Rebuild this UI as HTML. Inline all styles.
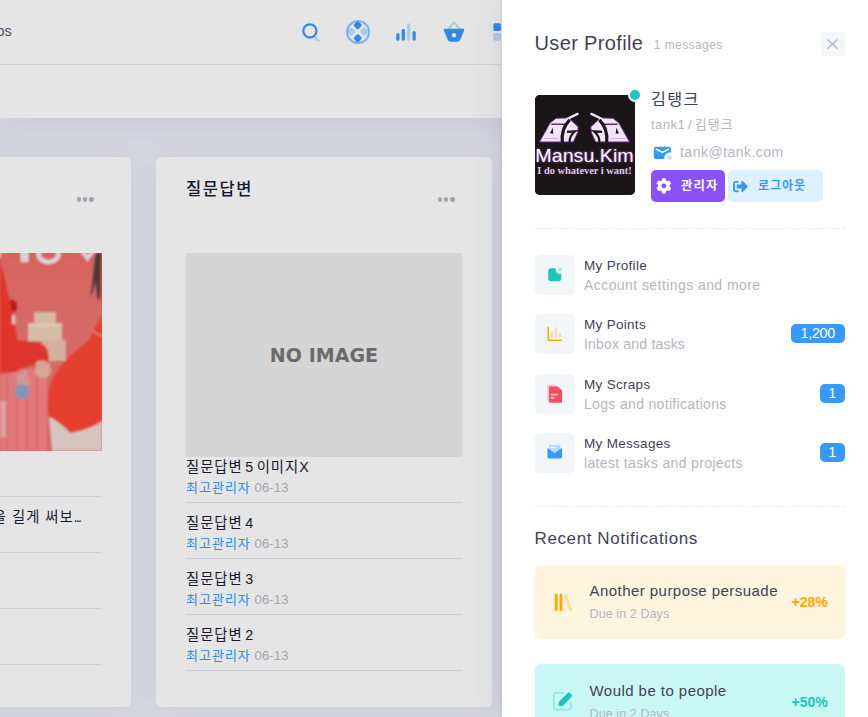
<!DOCTYPE html>
<html lang="ko">
<head>
<meta charset="utf-8">
<title>User Profile</title>
<style>
*{box-sizing:border-box;margin:0;padding:0}
html,body{width:868px;height:717px;overflow:hidden}
body{position:relative;background:#EEF0F8;font-family:"Liberation Sans","Noto Sans CJK KR",sans-serif;font-size:13px;color:#3F4254}
.abs{position:absolute}
#header{position:absolute;z-index:2;left:0;top:0;width:868px;height:65px;background:#fff;border-bottom:1px solid #E8EEF1}
#subheader{position:absolute;left:0;top:65px;width:868px;height:53px;background:#fff;box-shadow:0 10px 30px 0 rgba(82,63,105,.08)}
.menu-os{position:absolute;right:856.4px;top:21.8px;font-size:14.3px;line-height:18px;color:#50567A;white-space:nowrap}
.card{position:absolute;top:157px;height:550px;background:#fff;border-radius:5.5px;box-shadow:0 0 30px 0 rgba(82,63,105,.05)}
#card1{left:-205px;width:336px}
#card2{left:156px;width:336px}
.card h3{position:absolute;left:30px;top:19.2px;font-size:16.5px;font-weight:500;color:#181C32;white-space:nowrap;letter-spacing:1.6px}
.dots{position:absolute;top:40.2px;right:36.5px;width:18px;height:5px}
.dots i{position:absolute;top:0;width:4.6px;height:4.6px;border-radius:50%;background:#B5B5C3}
.noimg{position:absolute;left:30px;top:96px;width:276px;height:204px;background:#EEEEEE;text-align:center;line-height:204px;font-family:"DejaVu Sans","Liberation Sans",sans-serif;font-weight:bold;font-size:19px;color:#777;letter-spacing:.05px}
.row{position:absolute;left:30px;width:276px;height:56px;border-bottom:1px solid #E0E7EC}
.row .t{position:absolute;left:0;top:10px;font-size:14.3px;color:#181C32;white-space:nowrap;line-height:20px;letter-spacing:1px;word-spacing:-2.4px}
.row .m{position:absolute;left:0;top:31px;font-size:13px;color:#B5B5C3;white-space:nowrap;line-height:20px;letter-spacing:.15px}
.row .m b{font-weight:400;color:#3699FF;letter-spacing:1px}
#overlay{position:absolute;z-index:5;left:0;top:0;width:868px;height:717px;background:rgba(0,0,0,.1)}
#panel{position:absolute;z-index:6;left:502px;top:0;width:375px;height:717px;background:#fff;box-shadow:0 0 28px 0 rgba(82,63,105,.13),-1px 0 3px 0 rgba(0,0,0,.06)}

#panel .ttl{position:absolute;left:32.5px;top:29.8px;font-size:20px;line-height:26px;color:#3F4254;white-space:nowrap;letter-spacing:.36px}
#panel .ttl small{font-size:12px;color:#B5B5C3;margin-left:10.5px;letter-spacing:.42px;position:relative;top:-.6px}
.close{position:absolute;left:319px;top:32px;width:24px;height:24px;border-radius:4px;background:#F3F6F9}
.close svg{position:absolute;left:0;top:0}
.avatar{position:absolute;left:33px;top:95px;width:100px;height:100px;border-radius:5px;overflow:hidden;background:#1a1517}
.online{position:absolute;left:126px;top:88px;width:14px;height:14px;border-radius:50%;background:#1BC5BD;border:2px solid #fff}
.uname{position:absolute;left:149px;top:86px;font-size:16.25px;line-height:26px;color:#3F4254;white-space:nowrap;letter-spacing:1.3px}
.uid{position:absolute;left:149px;top:114px;font-size:13.2px;line-height:22px;color:#B5B5C3;white-space:nowrap;letter-spacing:.38px;word-spacing:-1.3px}
.uid span{font-size:13px;letter-spacing:1.04px}
.mail{position:absolute;left:148.8px;top:140.7px}
.email{position:absolute;left:178px;top:141px;font-size:14px;line-height:22px;color:#B5B5C3;white-space:nowrap;letter-spacing:.48px}
.btn{position:absolute;top:170px;height:32px;border-radius:5px;font-size:12px;font-weight:700;line-height:32px;white-space:nowrap;letter-spacing:.96px}
.btn svg{position:absolute}
.btn-admin{left:149px;width:74px;background:#8950FC;color:#fff;font-size:12.3px;letter-spacing:1.2px}
.btn-logout{left:226px;width:95px;background:#E1F0FF;color:#3699FF}
.sep{position:absolute;left:32.5px;width:310px;height:0;border-top:1px dashed #EBEDF3}
.nav{position:absolute;left:32.5px;width:310px;height:40px}
.nav .sym{position:absolute;left:0;top:0;width:40px;height:40px;border-radius:5.5px;background:#F3F6F9}
.nav .sym svg{position:absolute;left:10.25px;top:10.25px;width:19.5px;height:19.5px}
.nav .a{position:absolute;left:49.5px;top:1px;font-size:13.5px;line-height:20px;color:#3F4254;white-space:nowrap;letter-spacing:.3px}
.nav .b{position:absolute;left:49.5px;top:20px;font-size:14px;line-height:20px;color:#B5B5C3;white-space:nowrap;letter-spacing:.43px}
.badge{position:absolute;right:0;top:9.75px;height:19.5px;border-radius:5px;background:#3699FF;color:#fff;font-size:14.3px;line-height:19.5px;text-align:center;letter-spacing:-.25px}
.h5{position:absolute;left:32.5px;top:527.2px;font-size:17px;line-height:24px;color:#3F4254;white-space:nowrap;letter-spacing:.61px}
.note{position:absolute;left:32.5px;width:310px;height:74px;border-radius:6px}
.note svg{position:absolute;left:16.25px;top:25.6px;width:22.75px;height:22.75px}
.note .a{position:absolute;left:55px;top:16px;font-size:15px;line-height:20px;color:#3F4254;white-space:nowrap;letter-spacing:.45px}
.note .b{position:absolute;left:55px;top:40px;font-size:12.5px;line-height:18px;color:#B5B5C3;white-space:nowrap;letter-spacing:.1px}
.note .pct{position:absolute;right:16.8px;top:27.2px;font-size:14px;font-weight:700;line-height:20px;white-space:nowrap;letter-spacing:0}
.hi{position:absolute}
.ring{position:absolute;left:346px;top:20px;width:24px;height:24px;border-radius:50%;border:2px solid rgba(54,153,255,.55)}
.photo{position:absolute;left:204.5px;top:96px}
</style>
</head>
<body>
<div id="header">
  <div class="menu-os">Apps</div>
  <svg class="hi" style="left:297.5px;top:19px" width="26" height="26" viewBox="0 0 24 24" fill="#3699FF"><path d="M14.2928932,16.7071068 C13.9023689,16.3165825 13.9023689,15.6834175 14.2928932,15.2928932 C14.6834175,14.9023689 15.3165825,14.9023689 15.7071068,15.2928932 L19.7071068,19.2928932 C20.0976311,19.6834175 20.0976311,20.3165825 19.7071068,20.7071068 C19.3165825,21.0976311 18.6834175,21.0976311 18.2928932,20.7071068 L14.2928932,16.7071068 Z" opacity="0.3"/><path d="M11,16 C13.7614237,16 16,13.7614237 16,11 C16,8.23857625 13.7614237,6 11,6 C8.23857625,6 6,8.23857625 6,11 C6,13.7614237 8.23857625,16 11,16 Z M11,18 C7.13400675,18 4,14.8659932 4,11 C4,7.13400675 7.13400675,4 11,4 C14.8659932,4 18,7.13400675 18,11 C18,14.8659932 14.8659932,18 11,18 Z"/></svg>
  <div class="ring"></div>
  <svg class="hi" style="left:345px;top:18.8px" width="26" height="26" viewBox="0 0 24 24" fill="#3699FF"><path d="M2.56,10.68 L4.68,8.56 C5.27,7.97 6.22,7.97 6.8,8.56 L8.92,10.68 C9.51,11.27 9.51,12.22 8.92,12.8 L6.8,14.92 C6.22,15.51 5.27,15.51 4.68,14.92 L2.56,12.8 C1.97,12.22 1.97,11.27 2.56,10.68 Z M14.56,10.68 L16.68,8.56 C17.27,7.97 18.22,7.97 18.8,8.56 L20.92,10.68 C21.51,11.27 21.51,12.22 20.92,12.8 L18.8,14.92 C18.22,15.51 17.27,15.51 16.68,14.92 L14.56,12.8 C13.97,12.22 13.97,11.27 14.56,10.68 Z" opacity="0.3"/><path d="M8.56,16.68 L10.68,14.56 C11.27,13.97 12.22,13.97 12.8,14.56 L14.92,16.68 C15.51,17.27 15.51,18.22 14.92,18.8 L12.8,20.92 C12.22,21.51 11.27,21.51 10.68,20.92 L8.56,18.8 C7.97,18.22 7.97,17.27 8.56,16.68 Z M8.56,4.68 L10.68,2.56 C11.27,1.97 12.22,1.97 12.8,2.56 L14.92,4.68 C15.51,5.27 15.51,6.22 14.92,6.8 L12.8,8.92 C12.22,9.51 11.27,9.51 10.68,8.92 L8.56,6.8 C7.97,6.22 7.97,5.27 8.56,4.68 Z"/></svg>
  <svg class="hi" style="left:393px;top:19px" width="26" height="26" viewBox="0 0 24 24" fill="#3699FF"><rect opacity="0.3" x="13" y="4" width="3" height="16" rx="1.5"/><rect x="8" y="9" width="3" height="11" rx="1.5"/><rect x="18" y="11" width="3" height="9" rx="1.5"/><rect x="3" y="13" width="3" height="7" rx="1.5"/></svg>
  <svg class="hi" style="left:441px;top:19px" width="26" height="26" viewBox="0 0 24 24" fill="#3699FF"><path d="M12,4.56204994 L7.76822128,9.6401844 C7.4146572,10.0644613 6.7840925,10.1217854 6.3598156,9.76822128 C5.9355387,9.4146572 5.87821464,8.7840925 6.23177872,8.3598156 L11.2317787,2.3598156 C11.6315738,1.88006147 12.3684262,1.88006147 12.7682213,2.3598156 L17.7682213,8.3598156 C18.1217854,8.7840925 18.0644613,9.4146572 17.6401844,9.76822128 C17.2159075,10.1217854 16.5853428,10.0644613 16.2317787,9.6401844 L12,4.56204994 Z" opacity="0.3"/><path d="M3.5,9 L20.5,9 C21.0522847,9 21.5,9.44771525 21.5,10 C21.5,10.132026 21.4738562,10.2627452 21.4230769,10.3846154 L17.7692308,19.1538462 C17.3034221,20.271787 16.2111026,21 15,21 L9,21 C7.78889745,21 6.6965779,20.271787 6.23076923,19.1538462 L2.57692308,10.3846154 C2.36450587,9.87481408 2.60558331,9.28934029 3.11538462,9.07692308 C3.23725479,9.02614384 3.36797398,9 3.5,9 Z M12,17 C13.1045695,17 14,16.1045695 14,15 C14,13.8954305 13.1045695,13 12,13 C10.8954305,13 10,13.8954305 10,15 C10,16.1045695 10.8954305,17 12,17 Z"/></svg>
  <svg class="hi" style="left:488.9px;top:18.8px" width="26" height="26" viewBox="0 0 24 24" fill="#3699FF"><rect x="4" y="4" width="7" height="7" rx="1.5"/><path d="M5.5,13 L9.5,13 C10.33,13 11,13.67 11,14.5 L11,18.5 C11,19.33 10.33,20 9.5,20 L5.5,20 C4.67,20 4,19.33 4,18.5 L4,14.5 C4,13.67 4.67,13 5.5,13 Z M14.5,4 L18.5,4 C19.33,4 20,4.67 20,5.5 L20,9.5 C20,10.33 19.33,11 18.5,11 L14.5,11 C13.67,11 13,10.33 13,9.5 L13,5.5 C13,4.67 13.67,4 14.5,4 Z M14.5,13 L18.5,13 C19.33,13 20,13.67 20,14.5 L20,18.5 C20,19.33 19.33,20 18.5,20 L14.5,20 C13.67,20 13,19.33 13,18.5 L13,14.5 C13,13.67 13.67,13 14.5,13 Z" opacity="0.3"/></svg>

</div>
<div id="subheader"></div>

<div class="card" id="card1">
  <div class="dots"><i style="left:0"></i><i style="left:6.3px"></i><i style="left:12.6px"></i></div>
  <svg class="photo" width="102" height="198" viewBox="0 0 102 198">
<defs><filter id="pb" x="-5%" y="-5%" width="110%" height="110%"><feGaussianBlur stdDeviation="0.8"/></filter>
<linearGradient id="bgp" x1="0" y1="0" x2="0" y2="1"><stop offset="0" stop-color="#F06E66"/><stop offset=".35" stop-color="#EE7772"/><stop offset="1" stop-color="#F07470"/></linearGradient></defs>
<rect width="102" height="198" fill="url(#bgp)"/>
<g filter="url(#pb)">
<!-- banner letters -->
<path d="M-2,-2 L-2,4" stroke="#F3E9F6" stroke-width="6" fill="none"/>
<path d="M24.5,-4 L24.5,9.3" stroke="#F3E9F6" stroke-width="8.5" fill="none"/>
<path d="M38.5,-6 L38.5,0 C38.5,12 58.5,12 58.5,0 L58.5,-6" stroke="#F3E9F6" stroke-width="5.2" fill="none"/>
<path d="M80,-5 L87.5,5.5 L95,-5" stroke="#F3E9F6" stroke-width="4.2" fill="none"/>
<!-- stripes bottom left -->
<rect x="0" y="116" width="47" height="82" fill="#FB878B"/>
<path d="M7,116 V198 M17,116 V198 M27,116 V198 M37,116 V198" stroke="#F57A7E" stroke-width="2.5"/>
<rect x="0" y="148" width="6" height="36" fill="#FAB4B4"/>
<!-- cake tower -->
<rect x="34" y="59" width="22" height="14" fill="#EFCFB4"/>
<rect x="28" y="73" width="34" height="15" fill="#F0D2BC"/>
<rect x="42" y="87" width="24" height="21" fill="#EFC4B2"/>
<rect x="28" y="70" width="34" height="4" fill="#F6DCCB"/>
<!-- left figure -->
<path d="M0,8 C4,20 6,34 9,46 C13,56 15,72 17,87 C26,88 36,89 44,92 C50,97 50,108 46,115 L30,112 L15,119 L0,121 Z" fill="#F93A32"/>
<path d="M10,47 C17,45 19,55 15,59 C12,60 10,54 10,47 Z" fill="#D41E1A"/>
<rect x="12" y="62" width="3.4" height="9" fill="#F7D8D0"/>
<path d="M36,109 C44,105 53,110 51,120 C48,127 40,126 35,121 Z" fill="#EBB9AA"/>
<!-- mic -->
<path d="M16,120 L27,117 L30,132 L17,135 Z" fill="#E9A9A4"/><ellipse cx="22" cy="138.5" rx="7.2" ry="7.6" fill="#8FA9CC" transform="rotate(-18 22 138.5)"/>
<!-- right figure -->
<path d="M102,62 L93,78 C91,84 90,87 84,92 C72,100 58,112 50,132 C47,145 47,156 49,164 C58,168 64,174 70,180 C82,178 94,174 102,168 Z" fill="#FF4735"/>
<path d="M93,78 C96,80 99,82 102,83" stroke="#F9C9C0" stroke-width="1" fill="none"/>
<!-- thigh -->
<path d="M49,164 C58,168 64,174 70,180 C82,178 94,174 102,168 L102,198 L52,198 C51,188 50,176 49,164 Z" fill="#EDDCD7"/>
<!-- hair -->
<path d="M101,0 L96,0 C93.5,12 94,24 90,44 C92.5,40 94.5,34 95.5,28 C96.5,36 96.5,42 98,48 L101,40 Z" fill="#55403C"/><path d="M101,0 L102,0 L102,50 L100,46 Z" fill="#E8504A"/>
</g>
</svg>
  <div class="row" style="top:284px"></div>
  <div class="row" style="top:340px"><div class="t" style="left:auto;right:20.6px;top:10px;word-spacing:0">제목을 길게 써보<span style="letter-spacing:-1.7px">...</span></div></div>
  <div class="row" style="top:396px"></div>
  <div class="row" style="top:452px"></div>
</div>

<div class="card" id="card2">
  <h3>질문답변</h3>
  <div class="dots"><i style="left:0"></i><i style="left:6.3px"></i><i style="left:12.6px"></i></div>
  <div class="noimg">NO IMAGE</div>
  <div class="row" style="top:290px"><div class="t">질문답변 5 이미지X</div><div class="m"><b>최고관리자</b> 06-13</div></div>
  <div class="row" style="top:346px"><div class="t">질문답변 4</div><div class="m"><b>최고관리자</b> 06-13</div></div>
  <div class="row" style="top:402px"><div class="t">질문답변 3</div><div class="m"><b>최고관리자</b> 06-13</div></div>
  <div class="row" style="top:458px"><div class="t">질문답변 2</div><div class="m"><b>최고관리자</b> 06-13</div></div>
</div>

<div id="overlay"></div>

<div id="panel">
  <div class="ttl">User Profile<small>1 messages</small></div>
  <div class="close"><svg width="24" height="24" viewBox="0 0 24 24"><path d="M6.4 7.6 L16.6 16.8 M16.6 7.6 L6.4 16.8" stroke="#B5B5C3" stroke-width="1.3" fill="none"/></svg></div>

  <div class="avatar"><svg width="100" height="100" viewBox="0 0 100 100">
<defs><filter id="glow" x="-10%" y="-30%" width="120%" height="160%"><feGaussianBlur stdDeviation="0.9"/></filter><filter id="soft"><feGaussianBlur stdDeviation="0.35"/></filter></defs>
<rect width="100" height="100" fill="#1a1517"/>
<g filter="url(#soft)" transform="translate(49.5 18) scale(1.06 1.06) translate(-49.5 -18)">
<g id="tk">
<path d="M7,45.3 L17,27.5 L22.5,23 L34.5,22.6 L38,26 L43.6,31 L43,36.5 L39,45.3 Z" fill="#F3E3F8" stroke="#6B2F8A" stroke-width="0.9" stroke-linejoin="round"/>
<path d="M33.5,23.4 L43,18.8" stroke="#F3E3F8" stroke-width="2.2" stroke-linecap="round"/>
<path d="M18.2,28.6 L33.5,28.6" stroke="#3a1d4a" stroke-width="1.2"/>
<path d="M35.5,24.5 C30,30 27.6,37 28.6,45.6" stroke="#1a1517" stroke-width="3" fill="none"/>
<path d="M33,35.8 L40.5,35.3 C37,38 35.4,41.5 35.4,45.6" stroke="#1a1517" stroke-width="2" fill="none"/>
<path d="M17,37 L19.5,32 L20,37.5 Z" fill="#1a1517"/>
<path d="M11,42 L25,42" stroke="#C9A3DC" stroke-width="0.8"/>
</g>
<use href="#tk" transform="translate(99,0) scale(-1,1)"/>
</g>
<text x="49.5" y="66.8" text-anchor="middle" font-family="'Liberation Sans',sans-serif" font-size="18.5" fill="#B36AD8" filter="url(#glow)" textLength="98.4" lengthAdjust="spacingAndGlyphs">Mansu.Kim</text>
<text x="49.5" y="66.8" text-anchor="middle" font-family="'Liberation Sans',sans-serif" font-size="18.5" fill="#FBF4FF" textLength="98.4" lengthAdjust="spacingAndGlyphs">Mansu.Kim</text>
<text x="49.5" y="78.6" text-anchor="middle" font-family="'Liberation Serif',serif" font-weight="bold" font-size="9.6" fill="#E6C6F0" textLength="94.5" lengthAdjust="spacingAndGlyphs">I do whatever i want!</text>
</svg></div>
  <div class="online"></div>
  <div class="uname">김탱크</div>
  <div class="uid">tank1 / <span>김탱크</span></div>
  <svg class="mail" width="22.75" height="22.75" viewBox="0 0 24 24" fill="#3699FF"><path d="M21,12.0829584 C20.6747915,12.0283988 20.3407122,12 20,12 C16.6862915,12 14,14.6862915 14,18 C14,18.3407122 14.0283988,18.6747915 14.0829584,19 L5,19 C3.8954305,19 3,18.1045695 3,17 L3,8 C3,6.8954305 3.8954305,6 5,6 L19,6 C20.1045695,6 21,6.8954305 21,8 L21,12.0829584 Z M18.1444251,7.83964668 L12,11.1481833 L5.85557487,7.83964668 C5.4908718,7.6432681 5.03602525,7.77972206 4.83964668,8.14442513 C4.6432681,8.5091282 4.77972206,8.96397475 5.14442513,9.16035332 L11.6444251,12.6603533 C11.8664074,12.7798822 12.1335926,12.7798822 12.3555749,12.6603533 L18.8555749,9.16035332 C19.2202779,8.96397475 19.3567319,8.5091282 19.1603533,8.14442513 C18.9639747,7.77972206 18.5091282,7.6432681 18.1444251,7.83964668 Z"/><circle opacity="0.3" cx="19.5" cy="17.5" r="2.5"/></svg>
  <div class="email">tank@tank.com</div>
  <div class="btn btn-admin"><svg style="left:5.4px;top:8.4px" width="15.7" height="15.7" viewBox="0 0 512 512" fill="#fff"><path d="M487.4 315.700l-42.600-24.600c4.300-23.200 4.300-47 0-70.200l42.600-24.600c4.900-2.800 7.100-8.600 5.500-14-11.100-35.600-30-67.800-54.700-94.600-3.800-4.100-10-5.100-14.800-2.300L380.800 110c-17.900-15.400-38.500-27.300-60.800-35.100V25.800c0-5.600-3.900-10.500-9.400-11.700-36.700-8.200-74.300-7.800-109.200 0-5.500 1.200-9.400 6.100-9.400 11.700V75c-22.200 7.900-42.800 19.800-60.800 35.100L88.700 85.500c-4.900-2.800-11-1.900-14.800 2.300-24.700 26.700-43.600 58.900-54.700 94.600-1.700 5.400.6 11.200 5.500 14L67.300 221c-4.300 23.200-4.300 47 0 70.200l-42.600 24.600c-4.900 2.800-7.100 8.600-5.500 14 11.100 35.600 30 67.800 54.700 94.600 3.800 4.100 10 5.100 14.800 2.300l42.600-24.600c17.900 15.400 38.500 27.300 60.800 35.100v49.200c0 5.600 3.900 10.500 9.400 11.700 36.700 8.200 74.300 7.800 109.200 0 5.500-1.200 9.400-6.100 9.400-11.700v-49.200c22.200-7.900 42.800-19.800 60.800-35.100l42.600 24.600c4.900 2.800 11 1.900 14.800-2.300 24.700-26.700 43.600-58.900 54.700-94.600 1.500-5.500-.7-11.300-5.600-14.100zM256 336c-44.100 0-80-35.900-80-80s35.900-80 80-80 80 35.900 80 80-35.900 80-80 80z"/></svg><span style="position:absolute;left:30px">관리자</span></div>
  <div class="btn btn-logout"><svg style="left:5.2px;top:9px" width="15" height="15" viewBox="0 0 512 512" fill="#3699FF"><path d="M497 273L329 441c-15 15-41 4.500-41-17v-96H152c-13.300 0-24-10.700-24-24v-96c0-13.300 10.700-24 24-24h136V88c0-21.400 25.900-32 41-17l168 168c9.300 9.400 9.300 24.600 0 34zM192 436v-40c0-6.600-5.400-12-12-12H96c-17.700 0-32-14.300-32-32V160c0-17.700 14.300-32 32-32h84c6.600 0 12-5.400 12-12V76c0-6.600-5.400-12-12-12H96c-53 0-96 43-96 96v192c0 53 43 96 96 96h84c6.600 0 12-5.400 12-12z"/></svg><span style="position:absolute;left:30px">로그아웃</span></div>

  <div class="sep" style="top:228px"></div>

  <div class="nav" style="top:255px"><div class="sym"><svg viewBox="0 0 24 24" fill="#1BC5BD"><path d="M13.2070325,4 C13.0721672,4.47683179 13,4.97998812 13,5.5 C13,8.53756612 15.4624339,11 18.5,11 C19.0200119,11 19.5231682,10.9278328 20,10.7929675 L20,17 C20,18.6568542 18.6568542,20 17,20 L7,20 C5.34314575,20 4,18.6568542 4,17 L4,7 C4,5.34314575 5.34314575,4 7,4 L13.2070325,4 Z"/><circle opacity="0.3" cx="18.5" cy="5.5" r="2.5"/></svg></div><div class="a">My Profile</div><div class="b">Account settings and more</div></div>
  <div class="nav" style="top:314px"><div class="sym"><svg viewBox="0 0 24 24" fill="#FFA800"><rect opacity="0.3" x="12" y="4" width="3" height="13" rx="1.5"/><rect opacity="0.3" x="7" y="9" width="3" height="8" rx="1.5"/><path d="M5,19 L20,19 C20.5522847,19 21,19.4477153 21,20 C21,20.5522847 20.5522847,21 20,21 L4,21 C3.44771525,21 3,20.5522847 3,20 L3,4 C3,3.44771525 3.44771525,3 4,3 C4.55228475,3 5,3.44771525 5,4 L5,19 Z"/><rect opacity="0.3" x="17" y="11" width="3" height="6" rx="1.5"/></svg></div><div class="a">My Points</div><div class="b" style="letter-spacing:.2px">Inbox and tasks</div><div class="badge" style="width:53.5px">1,200</div></div>
  <div class="nav" style="top:374px"><div class="sym"><svg viewBox="0 0 24 24" fill="#F64E60"><path d="M4.85714286,1 L11.7364114,1 C12.0910962,1 12.4343066,1.12568431 12.7051108,1.35473959 L17.4686994,5.3839416 C17.8056532,5.66894833 18,6.08787823 18,6.52920201 L18,19.0833333 C18,20.8738751 17.9795521,21 16.1428571,21 L4.85714286,21 C3.02044787,21 3,20.8738751 3,19.0833333 L3,2.91666667 C3,1.12612489 3.02044787,1 4.85714286,1 Z" opacity="0.3"/><path fill-rule="evenodd" d="M6.85714286,3 L14.7364114,3 C15.0910962,3 15.4343066,3.12568431 15.7051108,3.35473959 L20.4686994,7.3839416 C20.8056532,7.66894833 21,8.08787823 21,8.52920201 L21,21.0833333 C21,22.8738751 20.9795521,23 19.1428571,23 L6.85714286,23 C5.02044787,23 5,22.8738751 5,21.0833333 L5,4.91666667 C5,3.12612489 5.02044787,3 6.85714286,3 Z M8,12 C7.44771525,12 7,12.4477153 7,13 C7,13.5522847 7.44771525,14 8,14 L15,14 C15.5522847,14 16,13.5522847 16,13 C16,12.4477153 15.5522847,12 15,12 L8,12 Z M8,16 C7.44771525,16 7,16.4477153 7,17 C7,17.5522847 7.44771525,18 8,18 L11,18 C11.5522847,18 12,17.5522847 12,17 C12,16.4477153 11.5522847,16 11,16 L8,16 Z"/></svg></div><div class="a">My Scraps</div><div class="b" style="letter-spacing:.33px">Logs and notifications</div><div class="badge" style="width:25px">1</div></div>
  <div class="nav" style="top:433px"><div class="sym"><svg viewBox="0 0 24 24" fill="#3699FF"><path fill-rule="evenodd" d="M6,2 L18,2 C18.5522847,2 19,2.44771525 19,3 L19,12 C19,12.5522847 18.5522847,13 18,13 L6,13 C5.44771525,13 5,12.5522847 5,12 L5,3 C5,2.44771525 5.44771525,2 6,2 Z M7.5,5 C7.22385763,5 7,5.22385763 7,5.5 C7,5.77614237 7.22385763,6 7.5,6 L13.5,6 C13.7761424,6 14,5.77614237 14,5.5 C14,5.22385763 13.7761424,5 13.5,5 L7.5,5 Z M7.5,7 C7.22385763,7 7,7.22385763 7,7.5 C7,7.77614237 7.22385763,8 7.5,8 L10.5,8 C10.7761424,8 11,7.77614237 11,7.5 C11,7.22385763 10.7761424,7 10.5,7 L7.5,7 Z" opacity="0.3"/><path d="M3.79274528,6.57253826 L12,12.5 L20.2072547,6.57253826 C20.4311176,6.4108595 20.7436609,6.46126971 20.9053396,6.68513259 C20.9668779,6.77033951 21,6.87277228 21,6.97787787 L21,17 C21,18.1045695 20.1045695,19 19,19 L5,19 C3.8954305,19 3,18.1045695 3,17 L3,6.97787787 C3,6.70173549 3.22385763,6.47787787 3.5,6.47787787 C3.60510559,6.47787787 3.70753836,6.51099993 3.79274528,6.57253826 Z"/></svg></div><div class="a">My Messages</div><div class="b" style="letter-spacing:.35px">latest tasks and projects</div><div class="badge" style="width:25px">1</div></div>

  <div class="sep" style="top:506px"></div>
  <div class="h5">Recent Notifications</div>

  <div class="note" style="top:565px;background:#FFF4DE"><svg viewBox="0 0 24 24" fill="#FFA800"><path d="M5,3 L6,3 C6.55228475,3 7,3.44771525 7,4 L7,20 C7,20.5522847 6.55228475,21 6,21 L5,21 C4.44771525,21 4,20.5522847 4,20 L4,4 C4,3.44771525 4.44771525,3 5,3 Z M10,3 L11,3 C11.5522847,3 12,3.44771525 12,4 L12,20 C12,20.5522847 11.5522847,21 11,21 L10,21 C9.44771525,21 9,20.5522847 9,20 L9,4 C9,3.44771525 9.44771525,3 10,3 Z"/><rect opacity="0.3" transform="translate(17.825568, 11.945519) rotate(-19) translate(-17.825568, -11.945519)" x="16.3255682" y="2.94551858" width="3" height="18" rx="1"/></svg><div class="a">Another purpose persuade</div><div class="b">Due in 2 Days</div><div class="pct" style="color:#FFA800">+28%</div></div>
  <div class="note" style="top:664.4px;background:#C9F7F5"><svg viewBox="0 0 24 24" fill="#1BC5BD"><path d="M12.2674799,18.2323597 L12.0084872,5.45852451 C12.0004303,5.06114792 12.1504154,4.6768183 12.4255037,4.38993949 L15.0030167,1.70195304 L17.5910752,4.40093695 C17.8599071,4.6812911 18.0095067,5.05499603 18.0083938,5.44341307 L17.9718262,18.2062508 C17.9694575,19.0329966 17.2985816,19.701953 16.4718324,19.701953 L13.7671717,19.701953 C12.9505952,19.701953 12.2840328,19.0487684 12.2674799,18.2323597 Z" transform="translate(14.701953, 10.701953) rotate(-135) translate(-14.701953, -10.701953)"/><path d="M12.9,2 C13.4522847,2 13.9,2.44771525 13.9,3 C13.9,3.55228475 13.4522847,4 12.9,4 L6,4 C4.8954305,4 4,4.8954305 4,6 L4,18 C4,19.1045695 4.8954305,20 6,20 L18,20 C19.1045695,20 20,19.1045695 20,18 L20,13 C20,12.4477153 20.4477153,12 21,12 C21.5522847,12 22,12.4477153 22,13 L22,18 C22,20.209139 20.209139,22 18,22 L6,22 C3.790861,22 2,20.209139 2,18 L2,6 C2,3.790861 3.790861,2 6,2 L12.9,2 Z" opacity="0.3"/></svg><div class="a" style="margin-top:.9px">Would be to people</div><div class="b" style="margin-top:.9px">Due in 2 Days</div><div class="pct" style="color:#1BC5BD">+50%</div></div>
</div>
</body>
</html>
